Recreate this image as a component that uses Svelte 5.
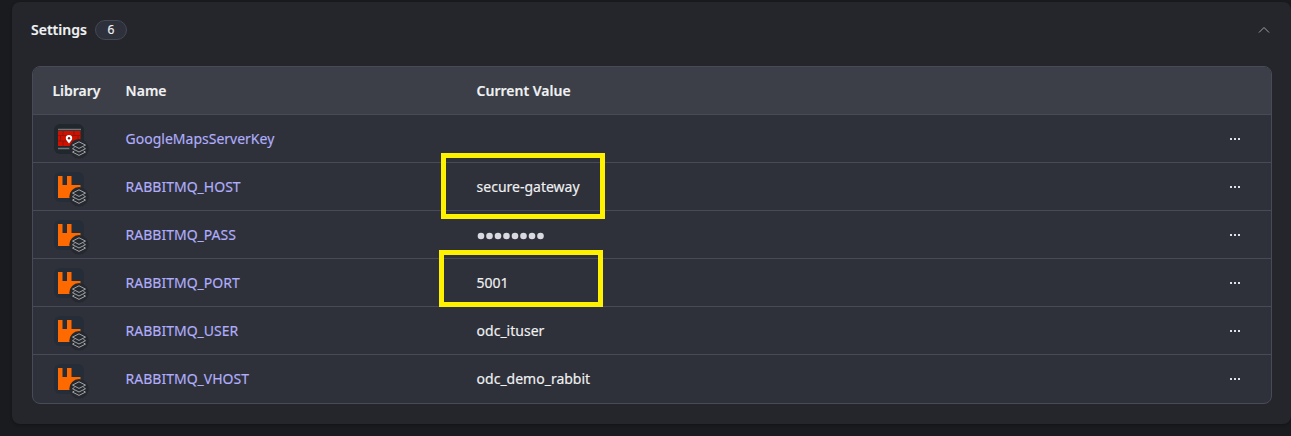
<script>
  const rows = [
    { name: 'GoogleMapsServerKey', value: '', maps: true },
    { name: 'RABBITMQ_HOST', value: 'secure-gateway', mark: 'host' },
    { name: 'RABBITMQ_PASS', secret: true },
    { name: 'RABBITMQ_PORT', value: '5001', mark: 'port' },
    { name: 'RABBITMQ_USER', value: 'odc_ituser' },
    { name: 'RABBITMQ_VHOST', value: 'odc_demo_rabbit' }
  ];
</script>

<main class="page">
  <section class="panel">
    <header class="head">
      <h2>Settings</h2>
      <span class="count">6</span>
      <svg class="chevron" width="12" height="8" viewBox="0 0 12 8"><path d="M1 6.500 6 1.500l5 5" /></svg>
    </header>
    <div class="table">
      <div class="row titles">
        <span class="first">Library</span><span>Name</span><span>Current Value</span><span></span>
      </div>
      {#each rows as row}
        <div class="row">
          <span class="lib">
            <svg width="36" height="36" viewBox="0 0 36 36">
              {#if row.maps}
                <rect width="30" height="30" rx="6" fill="#20282d" />
                <path d="M4 5.500h23M4 24.500h24" stroke="#6f7578" stroke-width="1.300" />
                <rect x="4" y="7" width="22.500" height="15" fill="#cf1200" />
                <path d="M4 11.500h22.500M4 17h22.500M9 7v4.500M20 7v4.500M6.500 11.500v5.500M24 11.500v5.500M9 17v5M20 17v5" stroke="#8b170f" stroke-width="0.900" fill="none" />
                <path d="M15 19.500c-1.500-2.400-3.200-3.500-3.200-5.300a3.200 3.200 0 0 1 6.400 0c0 1.800-1.700 2.900-3.200 5.300z" fill="#fff" />
                <circle cx="15" cy="14.200" r="1.200" fill="#75211c" />
              {:else}
                <rect width="30" height="30" rx="6" fill="#252d39" />
                <path d="M4 4h4.500v9h4.500V4h4.500v9H26.500v13H4z" fill="#ff6a00" />
              {/if}
              <circle cx="25" cy="24.800" r="9.700" fill="#25282d" />
              <g fill="none" stroke="#a0a4aa" stroke-width="1" stroke-linejoin="round">
                <path d="M25 17.800 31.500 21.100 25 24.400 18.500 21.100z" />
                <path d="M20.500 23.500 18.500 24.700 25 28l6.500-3.300-2-1.200" />
                <path d="M20.500 26.900 18.500 28.100 25 31.400l6.500-3.300-2-1.200" />
              </g>
            </svg>
          </span>
          <span class="name">{row.name}</span>
          <span class="value">
            {#if row.secret}
              <svg class="dots" width="68" height="8" viewBox="0 0 68 8">
                {#each Array(8) as _, i}<circle cx={4 + i * 8.500} cy="4" r="3.300" />{/each}
              </svg>
            {:else}{row.value}{/if}
            {#if row.mark}<i class="mark {row.mark}"></i>{/if}
          </span>
          <span class="more"><b></b><b></b><b></b></span>
        </div>
      {/each}
    </div>
  </section>
</main>

<style>
  :global(body) { background: #1a1b1f; overflow: hidden; }
  .page {
    box-sizing: border-box;
    height: 436px;
    padding: 2px 0 12px 12px;
    font: 14px/20px "Noto Sans", sans-serif;
    color: #f0f1f3;
    -webkit-text-stroke: 0.15px;
  }
  .panel {
    box-sizing: border-box;
    height: 422px;
    padding: 0 19px 0 20px;
    background: #25262b;
    border-radius: 8px;
    box-shadow: 0 1px 3px #131417;
  }
  .head { display: flex; align-items: center; height: 56px; padding: 0 2px 0 0; margin-left: -1px; }
  h2 { margin: 0; font-size: 14px; font-weight: 600; }
  .count {
    box-sizing: border-box;
    width: 32px;
    height: 20px;
    margin-left: 8px;
    border: 1px solid #434854;
    border-radius: 10px;
    background: #2e313b;
    text-align: center;
    font-size: 12px;
    line-height: 18px;
  }
  .chevron { margin-left: auto; fill: none; stroke: #a0a2a6; stroke-width: 1; }
  .table {
    box-sizing: border-box;
    height: 338px;
    margin-top: 8px;
    border: 1px solid #484b57;
    border-radius: 8px;
    background: #2f313a;
  }
  .row {
    box-sizing: border-box;
    display: grid;
    grid-template-columns: 72.6px 351px 1fr 11px;
    align-items: center;
    height: 48px;
    padding: 0 30px 0 20px;
    border-bottom: 1px solid #484b57;
  }
  .row:last-child { border-bottom: 0; }
  .titles { background: #3c3f48; border-radius: 7px 7px 0 0; font-weight: 600; }
  .first { margin-left: -0.6px; }
  .lib { height: 36px; margin: 6px 0 0 1px; }
  .lib svg { display: block; }
  .name { color: #b0aefa; }
  .value { position: relative; }
  .dots { display: block; fill: #d9dae0; margin: 3px 0 0 0.6px; }
  .more { display: flex; gap: 2px; }
  .more b { width: 2px; height: 2px; background: #e0e1e4; }
  .mark { position: absolute; box-sizing: border-box; width: 164px; border: 5px solid #fff200; }
  .host { left: -35.6px; top: -24px; height: 66px; }
  .port { left: -37.6px; top: -23px; height: 57px; }
</style>
